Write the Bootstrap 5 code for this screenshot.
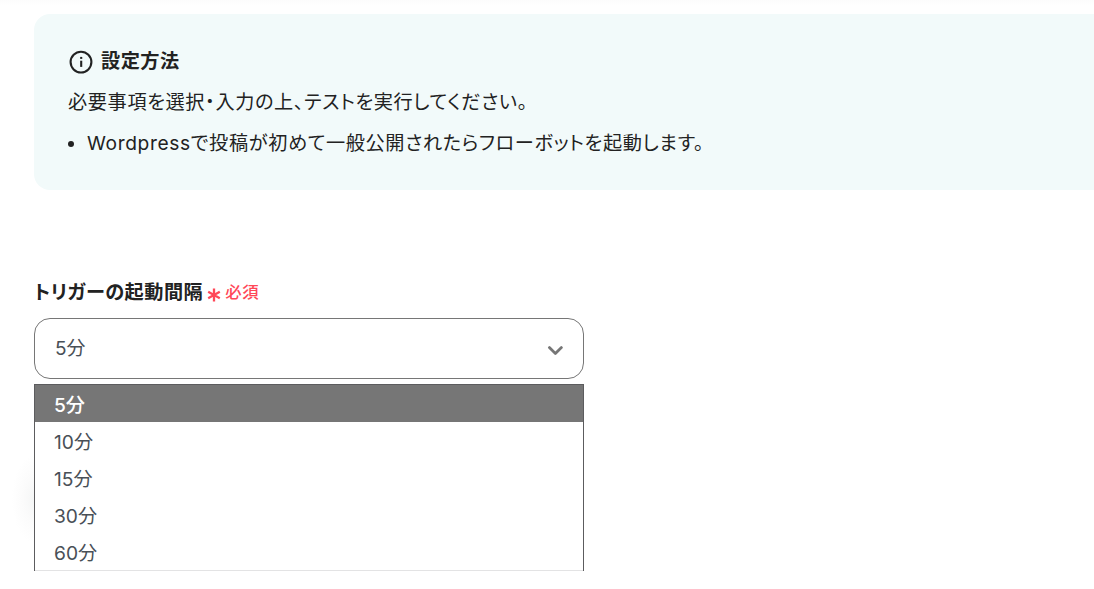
<!DOCTYPE html>
<html lang="ja">

<head>
   <meta charset="UTF-8">
   <title>トリガー設定</title>
   <link href="https://cdn.jsdelivr.net/npm/bootstrap@5.3.0/dist/css/bootstrap.min.css" rel="stylesheet">
   <style>
      body {
         font-family: Inter, "Noto Sans CJK JP", sans-serif;
         font-size: 19.2px;
         line-height: 29px;
         letter-spacing: .62px;
         font-feature-settings: "palt";
         color: #222;
      }

      .top-line {
         height: 14px;
         background: linear-gradient(#fcfcfc, #fff 6px);
      }

      .page-body {
         margin-left: 34px;
      }

      .guide {
         height: 176px;
         padding: 33px 0 0 34px;
         background-color: #f2fafa;
         border-radius: 16px 0 0 16px;
      }

      .guide-title {
         letter-spacing: .5px;
      }

      .guide-list {
         margin-top: 12px;
      }

      .guide-list li::before {
         content: "";
         width: 6px;
         height: 6px;
         margin: 1px 13px 0 0;
         border-radius: 50%;
         background-color: #222;
      }

      .trigger {
         width: 550px;
         margin-top: 88px;
      }

      .trigger-label {
         letter-spacing: .48px;
      }

      .required {
         color: #ff4757;
         font-size: 16.4px;
         font-weight: 500;
      }

      .interval-select {
         height: 61px;
         margin-top: 11px;
         padding: 0 20px;
         border: 1px solid #767676;
         border-radius: 16px;
         color: #495057;
         font-size: 19px;
         letter-spacing: 0;
      }

      .interval-menu {
         height: 187px;
         margin-top: 5px;
         border: solid #5c5c5e;
         border-width: 1px 1px 0;
         box-shadow: inset 0 -1px #e3e3e4;
         color: #495057;
         letter-spacing: 0;
      }

      .interval-menu li {
         height: 37px;
         padding: 2px 19px 0;
         line-height: 36px;
      }

      .interval-menu .selected {
         background-color: #767676;
         color: #fff;
         font-weight: 500;
      }

      .menu-shadow {
         left: -22px;
         top: 70px;
         width: 22px;
         height: 90px;
         background: radial-gradient(ellipse 22px 44px at 100% 50%, #f5f6f6, #fbfbfb 50%, #fff);
      }
   </style>
</head>

<body class="bg-white overflow-hidden">

   <div class="top-line"></div>
   <main class="page-body">
      <section class="guide">
         <div class="guide-title d-flex align-items-center fw-bold">
            <svg class="me-2" width="25" height="29" viewBox="0 0 25 29" fill="none" stroke="#222" stroke-width="2.1">
               <circle cx="13" cy="15.1" r="10.4" />
               <path d="M13.2 13.7v6.2" />
               <path d="M13.2 9.9v2" />
            </svg>
            <span>設定方法</span>
         </div>
         <p class="mb-0 mt-2 pt-1">必要事項を選択・入力の上、テストを実行してください。</p>
         <ul class="guide-list list-unstyled mb-0">
            <li class="d-flex align-items-center">Wordpressで投稿が初めて一般公開されたらフローボットを起動します。</li>
         </ul>
      </section>

      <section class="trigger">
         <div class="trigger-label d-flex align-items-center">
            <span class="fw-bold">トリガーの起動間隔</span>
            <svg class="ms-1 mt-1" width="14" height="14" viewBox="0 0 14 14" stroke="#ff4757" stroke-width="2.3">
               <path d="M7 .5v13M1.2 3.8l11.6 6.4M12.8 3.8L1.2 10.2" />
            </svg>
            <span class="required ms-1">必須</span>
         </div>
         <div class="interval-select d-flex align-items-center justify-content-between">
            <span>5分</span>
            <svg width="16" height="12" viewBox="0 0 16 12" fill="none" stroke="#767676" stroke-width="2.8" stroke-linecap="round" stroke-linejoin="round">
               <path d="M2.4 4.6l6 5.8 6-5.8" />
            </svg>
         </div>
         <div class="position-relative">
            <div class="menu-shadow position-absolute"></div>
            <ul class="interval-menu list-unstyled mb-0">
               <li class="selected">5分</li>
               <li>10分</li>
               <li>15分</li>
               <li>30分</li>
               <li>60分</li>
            </ul>
         </div>
      </section>
   </main>

   <script src="https://cdn.jsdelivr.net/npm/bootstrap@5.3.0/dist/js/bootstrap.bundle.min.js"></script>
</body>

</html>
